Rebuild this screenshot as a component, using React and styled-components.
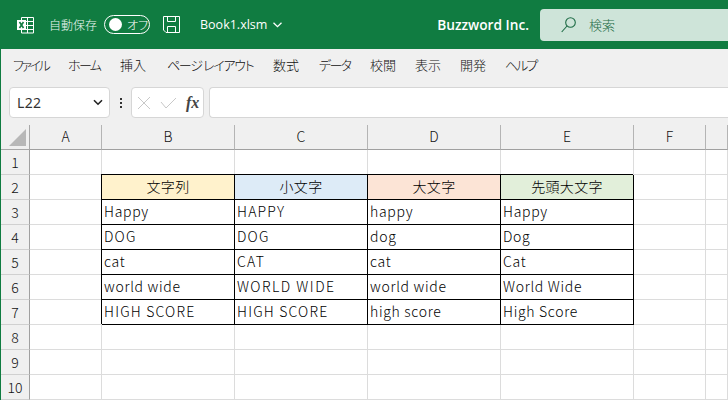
import React from 'react';
import styled, {createGlobalStyle} from 'styled-components';

const GlobalStyle = createGlobalStyle`
html, body {
  margin: 0;
  padding: 0;
  background: #fff;
  overflow: hidden;
}
body {
  font-family: "Noto Sans CJK JP", "Noto Sans", sans-serif;
  color: #222;
}
`;

const Root = styled.div`
width: 728px;
height: 400px;
overflow: hidden;
display: flex;
flex-direction: column;
`;

const TitleBar = styled.div`
flex: 0 0 49px;
height: 49px;
background: #107c41;
color: #fff;
display: flex;
align-items: center;
position: relative;
`;

const ExcelIcon = styled.svg`
margin-left: 17px;
width: 17px;
height: 18px;
`;

const AutoSaveLabel = styled.span`
margin-left: 15px;
font-size: 12px;
font-weight: 300;
color: #eef6f1;
font-feature-settings: "palt";
`;

const Toggle = styled.div`
margin-left: 7px;
width: 46px;
height: 19px;
box-sizing: border-box;
border: 1px solid #fff;
border-radius: 10px;
display: flex;
align-items: center;
padding-left: 4px;
gap: 5px;
font-size: 12px;
font-weight: 300;
white-space: nowrap;
font-feature-settings: "palt";
`;

const Knob = styled.span`
flex: 0 0 13px;
width: 13px;
height: 13px;
border-radius: 50%;
background: #fff;
`;

const SaveIcon = styled.svg`
margin-left: 13px;
width: 17px;
height: 17px;
`;

const FileName = styled.span`
margin-left: 20px;
font-family: "Open Sans", sans-serif;
font-size: 12.5px;
`;

const Chevron = styled.svg`
margin-left: 6px;
width: 9px;
height: 6px;
`;

const Company = styled.span`
margin-left: auto;
font-family: "Open Sans", sans-serif;
font-weight: 600;
font-size: 13.7px;
`;

const SearchBox = styled.div`
margin-left: 11px;
width: 188px;
height: 32px;
background: #cee4d9;
border-radius: 4px 0 0 4px;
display: flex;
align-items: center;
padding-left: 21px;
box-sizing: border-box;
color: #1d6b45;
font-size: 13px;
font-weight: 300;
gap: 13px;
`;

const Body = styled.div`
flex: 1;
display: flex;
flex-direction: column;
border-left: 1px solid #107c41;
background: #f0f0f0;
min-height: 0;
`;

const TabBar = styled.div`
height: 38px;
flex: 0 0 38px;
display: flex;
align-items: center;
padding-left: 12px;
padding-bottom: 7px;
box-sizing: border-box;
font-size: 13px;
font-weight: 300;
color: #111;
font-feature-settings: "palt";
`;

const Tab = styled.span`
width: ${p => p.$w}px;
letter-spacing: ${p => p.$squeeze || 0}px;
white-space: nowrap;
`;

const FormulaRow = styled.div`
height: 31px;
flex: 0 0 31px;
display: flex;
align-items: stretch;
padding-left: 8px;
`;

const Well = styled.div`
box-sizing: border-box;
background: #fff;
border: 1px solid #d6d6d6;
border-radius: 4px;
display: flex;
align-items: center;
`;

const NameBox = styled(Well)`
width: 101px;
padding: 0 6px 0 7px;
justify-content: space-between;
font-family: "Noto Sans", sans-serif;
font-size: 14px;
letter-spacing: .3px;
color: #333;
`;

const Dots = styled.div`
width: 21px;
display: flex;
flex-direction: column;
align-items: center;
justify-content: center;
gap: 2px;
`;

const Dot = styled.span`
width: 2px;
height: 2px;
background: #333;
`;

const FxBox = styled(Well)`
width: 73px;
padding-left: 5px;
gap: 9px;
`;

const FxLabel = styled.span`
font-family: "Liberation Serif", serif;
font-style: italic;
font-weight: 700;
font-size: 16px;
line-height: 18px;
color: #444;
`;

const FormulaInput = styled(Well)`
margin-left: 5px;
flex: 1;
border-right: 0;
border-radius: 4px 0 0 4px;
`;

const Sheet = styled.div`
margin-top: 7px;
flex: 1;
display: grid;
grid-template-columns: 29px 72px 133px 133px 133px 133px 72px 1fr;
grid-auto-rows: 25px;
grid-template-rows: 25px;
background: #fff;
font-size: 14px;
font-weight: 300;
`;

const Corner = styled.div`
background: #f0f0f0;
border-right: 1px solid #a8a8a8;
border-bottom: 1px solid #a8a8a8;
box-sizing: border-box;
display: flex;
align-items: flex-end;
justify-content: flex-end;
padding: 0 3px 3px 0;
`;

const ColHead = styled.div`
background: #f0f0f0;
border-right: 1px solid #b4b4b4;
border-bottom: 1px solid #a0a0a0;
box-sizing: border-box;
display: flex;
align-items: center;
justify-content: center;
padding-bottom: 2px;
color: #111;
`;

const RowHead = styled(ColHead)`
border-right: 1px solid #a0a0a0;
border-bottom: 1px solid #d0d0d0;
padding-bottom: 1px;
`;

const Cell = styled.div`
box-sizing: border-box;
border-right: 1px solid ${p => (p.$boxed ? '#000' : '#dcdcdc')};
border-bottom: 1px solid ${p => (p.$boxed ? '#000' : '#dcdcdc')};
background: ${p => p.$fill || '#fff'};
box-shadow: ${p => (p.$boxed ? '-1px -1px 0 #000' : 'none')};
display: flex;
align-items: center;
justify-content: ${p => (p.$center ? 'center' : 'flex-start')};
padding-left: ${p => (p.$center ? 0 : 2)}px;
padding-bottom: 2px;
letter-spacing: ${p => p.$spacing || 0}px;
color: #000;
white-space: nowrap;
`;

const columns = ['A', 'B', 'C', 'D', 'E', 'F'];
const heads = [
  {text: '文字列', fill: '#fff2cc'},
  {text: '小文字', fill: '#ddebf7'},
  {text: '大文字', fill: '#fce4d6'},
  {text: '先頭大文字', fill: '#e2efda'},
];
const data = [
  ['Happy', 'HAPPY', 'happy', 'Happy'],
  ['DOG', 'DOG', 'dog', 'Dog'],
  ['cat', 'CAT', 'cat', 'Cat'],
  ['world wide', 'WORLD WIDE', 'world wide', 'World Wide'],
  ['HIGH SCORE', 'HIGH SCORE', 'high score', 'High Score'],
];
const tabs = [
  ['ファイル', 55, -2.4], ['ホーム', 52, -1.6], ['挿入', 47, 0], ['ページ レイアウト', 106, -1.3], ['数式', 46, 0],
  ['データ', 51, -1.7], ['校閲', 45, 0], ['表示', 45, 0], ['開発', 45, 0], ['ヘルプ', 40, -2],
];

// capitals run wider in the original font than in the fallback
const spacingFor = t => {
  if (t === 'WORLD WIDE') return 1.5;
  return t === t.toUpperCase() ? 1.2 : 0.7;
};

function GridRow({n}) {
  let cells;
  if (n === 2) {
    cells = heads.map(h => <Cell key={h.text} $boxed $center $fill={h.fill} $spacing={0.3}>{h.text}</Cell>);
  } else if (n >= 3 && n <= 7) {
    cells = data[n - 3].map((t, i) => <Cell key={i} $boxed $spacing={spacingFor(t)}>{t}</Cell>);
  } else {
    cells = heads.map(h => <Cell key={h.text}/>);
  }
  return (
    <>
      <RowHead>{n}</RowHead>
      <Cell/>
      {cells}
      <Cell/>
      <Cell/>
    </>
  );
}

export default function App() {
  return (
    <Root>
      <GlobalStyle/>
      <TitleBar>
        <ExcelIcon viewBox="0 0 17 18">
          <path d="M4.5 1.5H16.5V17H4.5Z M4.5 5.5H16.5 M4.5 9.5H16.5 M4.5 13.5H16.5 M10.5 1.5V17" fill="none" stroke="#fff"/>
          <rect x="0" y="4" width="9" height="10" fill="#fff"/>
          <path d="M2.5 6L6.5 12M6.5 6L2.5 12" stroke="#107c41" strokeWidth="1.6"/>
        </ExcelIcon>
        <AutoSaveLabel>自動保存</AutoSaveLabel>
        <Toggle><Knob/>オフ</Toggle>
        <SaveIcon viewBox="0 0 17 17" fill="none" stroke="#fff">
          <path d="M.5.5H16.5V16.5H3L.5 14Z"/>
          <path d="M4.5.5V5.5H12.5V.5M4.5 16.5V10.5H12.5V16.5"/>
        </SaveIcon>
        <FileName>Book1.xlsm</FileName>
        <Chevron viewBox="0 0 9 6" fill="none" stroke="#fff" strokeWidth="1.3">
          <path d="M.5.7L4.5 4.7L8.5.7"/>
        </Chevron>
        <Company>Buzzword Inc.</Company>
        <SearchBox>
          <svg width="15" height="16" viewBox="0 0 15 16" fill="none" stroke="#1d6b45" strokeWidth="1.1">
            <circle cx="9.5" cy="5.5" r="4.8"/>
            <path d="M6 9L.7 15"/>
          </svg>
          検索
        </SearchBox>
      </TitleBar>
      <Body>
        <TabBar>
          {tabs.map(([t, w, s]) => <Tab key={t} $w={w} $squeeze={s}>{t}</Tab>)}
        </TabBar>
        <FormulaRow>
          <NameBox>
            L22
            <svg width="10" height="7" viewBox="0 0 10 7" fill="none" stroke="#222" strokeWidth="1.6">
              <path d="M1 1.2L5 5.2L9 1.2"/>
            </svg>
          </NameBox>
          <Dots><Dot/><Dot/><Dot/></Dots>
          <FxBox>
            <svg width="14" height="14" viewBox="0 0 14 14" fill="none" stroke="#c8c8c8" strokeWidth="1">
              <path d="M1 1L13 13M13 1L1 13"/>
            </svg>
            <svg width="17" height="12" viewBox="0 0 17 12" fill="none" stroke="#c8c8c8" strokeWidth="1">
              <path d="M1 5L6 11L16 1"/>
            </svg>
            <FxLabel>fx</FxLabel>
          </FxBox>
          <FormulaInput/>
        </FormulaRow>
        <Sheet>
          <Corner>
            <svg width="17" height="17" viewBox="0 0 17 17"><path d="M17 0V17H0Z" fill="#b8b8b8"/></svg>
          </Corner>
          {columns.map(c => <ColHead key={c}>{c}</ColHead>)}
          <ColHead/>
          {[1, 2, 3, 4, 5, 6, 7, 8, 9, 10].map(n => <GridRow key={n} n={n}/>)}
        </Sheet>
      </Body>
    </Root>
  );
}
